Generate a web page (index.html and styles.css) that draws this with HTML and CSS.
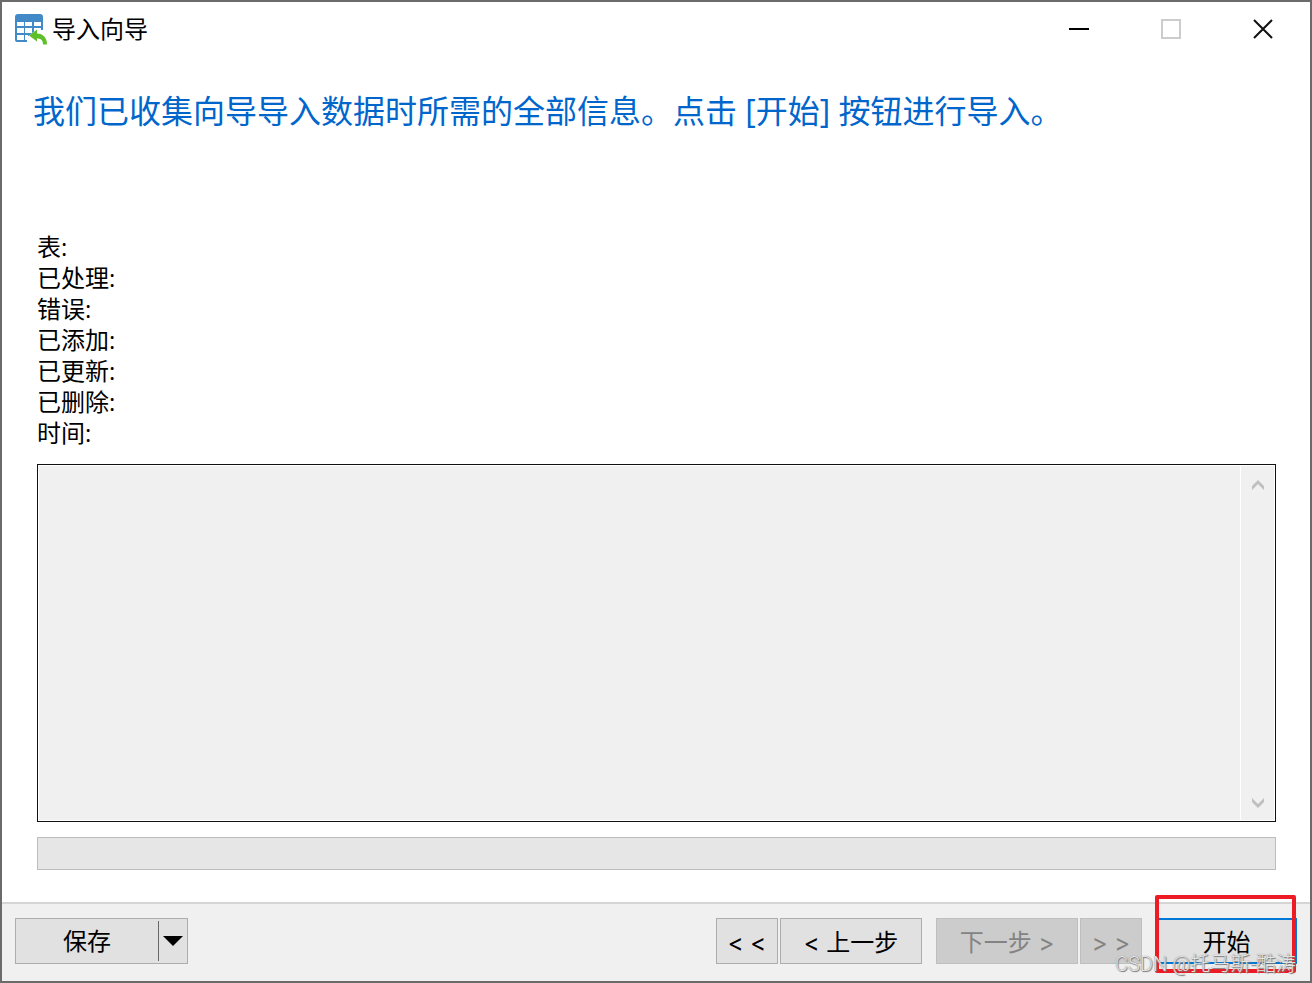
FILE: index.html
```html
<!DOCTYPE html>
<html lang="zh-CN">
<head>
    <meta charset="UTF-8">
    <title>导入向导</title>
    <link rel="stylesheet" href="styles.css">
</head>
<body>
    <div class="window">
        <header class="titlebar">
            <svg class="app-icon" width="33" height="31" viewBox="0 0 33 31">
                <path d="M0 26V3a3 3 0 0 1 3-3h22a3 3 0 0 1 3 3v13h-7l-9 7v5H2a2 2 0 0 1-2-2z" fill="#4189c7"/>
                <path d="M2 8h7v4H2zM10 8h7v4h-7zM19 8h7v4h-7zM2 14h7v5H2zM10 14h7v5h-7zM19 14h7v5h-7zM2 21h7v5H2zM10 21h3v5h-3z" fill="#fff"/>
                <path d="M14 21.500l8-6v4c6 0 10 4 10 11h-4c0-4-2-6-6-6v3z" fill="#5fbf28"/>
            </svg>
            <span class="title">导入向导</span>
            <div class="window-controls">
                <button type="button" aria-label="最小化"><svg width="20" height="20"><path d="M0 10h20" stroke="#000" stroke-width="2"/></svg></button>
                <button type="button" aria-label="最大化" disabled><svg width="20" height="20"><path d="M1 1h18v18H1z" fill="none" stroke="#ccc" stroke-width="2"/></svg></button>
                <button type="button" aria-label="关闭"><svg width="20" height="20"><path d="M1 1l18 18M19 1L1 19" stroke="#111" stroke-width="2"/></svg></button>
            </div>
        </header>

        <main class="content">
            <h1>我们已收集向导导入数据时所需的全部信息。点击 [开始] 按钮进行导入。</h1>

            <ul class="stats">
                <li>表:</li>
                <li>已处理:</li>
                <li>错误:</li>
                <li>已添加:</li>
                <li>已更新:</li>
                <li>已删除:</li>
                <li>时间:</li>
            </ul>

            <div class="log">
                <textarea class="log-text" aria-label="日志" readonly></textarea>
                <div class="scrollbar">
                    <svg width="12" height="10"><path d="M0 6L6 0l6 6v4L6 4 0 10z" fill="#bfbfbf"/></svg>
                    <svg width="12" height="10"><path d="M0 0l6 6 6-6v4L6 10 0 4z" fill="#bfbfbf"/></svg>
                </div>
            </div>

            <progress class="progress" value="0" max="100" aria-label="进度"></progress>
        </main>

        <footer class="footer">
            <div class="split">
                <button type="button" class="btn save">保存</button>
                <button type="button" class="btn arrow" aria-label="更多"><svg width="20" height="10"><path d="M0 0h20L10 10z"/></svg></button>
            </div>
            <div class="nav">
                <button type="button" class="btn small">&lt; &lt;</button>
                <button type="button" class="btn">&lt; 上一步</button>
            </div>
            <div class="nav">
                <button type="button" class="btn" disabled>下一步 &gt;</button>
                <button type="button" class="btn small" disabled>&gt; &gt;</button>
            </div>
            <div class="start-wrap">
                <button type="button" class="btn start">开始</button>
                <div class="highlight"></div>
            </div>
            <span class="watermark">CSDN @托马斯-酷涛</span>
        </footer>
    </div>
</body>
</html>
```

FILE: styles.css
```css
* { box-sizing: border-box; }
body { margin: 0; font-family: "Open Sans", "Noto Sans CJK SC", sans-serif; font-size: 24px; color: #000; background: #fff; }
button { font: inherit; }
svg { display: block; }

.window { display: flex; flex-direction: column; min-height: 100vh; border: 2px solid #6b6b6b; background: #fff; }

.titlebar { display: flex; align-items: center; height: 54px; padding: 0 1px 0 13px; }
.title { margin-left: 4px; line-height: 36px; }
.window-controls { display: flex; margin-left: auto; }
.window-controls button { display: flex; align-items: center; justify-content: center; width: 92px; height: 54px; padding: 0; border: none; background: none; }

.content { display: flex; flex-direction: column; flex: 1; padding: 0 34px 32px 35px; }
h1 { margin: 31px 0 0 -4px; font-size: 32px; font-weight: 400; line-height: 48px; color: #0066cc; }
.stats { margin: 96px 0 16px; padding: 0; list-style: none; line-height: 31px; }

.log { display: flex; flex: 1; min-height: 200px; border: 1px solid #111; background: #f0f0f0; }
.log-text { flex: 1; padding: 4px; border: 1px solid #fff; border-right: none; outline: none; resize: none; background: #f0f0f0; font: inherit; }
.scrollbar { display: flex; flex-direction: column; justify-content: space-between; align-items: center; width: 35px; padding: 14px 0 12px; border: 1px solid #fff; }

.progress { display: block; width: 100%; height: 33px; margin-top: 15px; border: 1px solid #bcbcbc; background: #e6e6e6; appearance: none; }
.progress::-webkit-progress-bar { background: #e6e6e6; }
.progress::-webkit-progress-value { background: #06b025; }

.footer { position: relative; display: flex; gap: 14px; padding: 14px 13px 17px; border-top: 2px solid #d5d5d5; background: #f0f0f0; }
.btn { width: 142px; height: 46px; padding: 4px 0 0; border: 1px solid #adadad; background: #e1e1e1; color: #000; font-family: Inter, "Noto Sans CJK SC", sans-serif; line-height: 40px; white-space: nowrap; }
.btn:disabled { border-color: #bfbfbf; background: #ccc; color: #838383; }
.small { width: 62px; }
.nav { display: flex; gap: 2px; }

.split { display: flex; margin-right: auto; border: 1px solid #adadad; background: #e1e1e1; }
.split .btn { height: 44px; border: none; background: none; }
.split .save { padding: 2px 0 0; }
.split .arrow { display: flex; align-items: center; justify-content: center; width: 29px; height: 40px; margin: 2px 0; padding: 0; border-left: 1px solid #696969; }

.start-wrap { position: relative; }
.start { width: 141px; border: 2px solid #0078d7; line-height: 38px; }
/* red frame round the start button */
.highlight { position: absolute; inset: -23px 1px -9px -1px; border: 4px solid #ed1c24; border-radius: 2px; pointer-events: none; }
.watermark { position: absolute; right: 14px; bottom: 4px; font-family: Roboto, "Noto Sans CJK SC", sans-serif; font-size: 20px; font-weight: 300; line-height: 26px; color: #e4e4e4; text-shadow: 1px 1px 1px #777, 0 0 1px #777; pointer-events: none; }
```
